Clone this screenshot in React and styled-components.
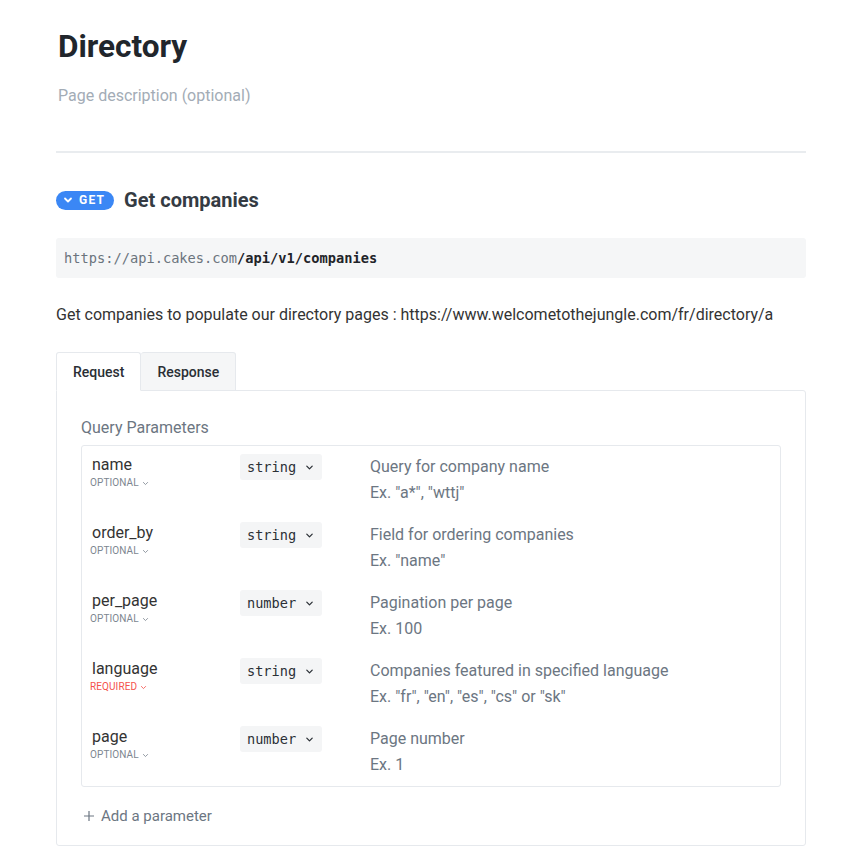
import React from 'react'
import styled, { createGlobalStyle } from 'styled-components'

const Global = createGlobalStyle`
  body {
    margin: 0;
    background: #fff;
    font-family: Roboto, 'Liberation Sans', sans-serif;
    color: #333;
  }
`

const Page = styled.div`
  padding: 29px 56px 0;
  width: 750px;
`
const Title = styled.h1`
  margin: 0 0 0 2px;
  font-size: 31.5px;
  line-height: 36px;
  font-weight: 700;
  color: #21262c;
`
const PageDesc = styled.p`
  margin: 19px 0 0 2px;
  font-size: 16px;
  line-height: 24px;
  color: #a3acb6;
`
const Divider = styled.hr`
  margin: 43px 0 0;
  border: 0;
  height: 2px;
  background: #e9ecef;
`
const EndpointHeader = styled.div`
  margin-top: 33px;
  display: flex;
  align-items: center;
  gap: 10px;
`
const Method = styled.span`
  display: inline-flex;
  align-items: center;
  gap: 6px;
  height: 19px;
  padding: 0 9px 0 7px;
  border-radius: 10px;
  background: #3b87f5;
  color: #fff;
  font-family: Roboto, sans-serif;
  font-size: 12px;
  font-weight: 700;
  letter-spacing: 1.2px;
`
const EndpointTitle = styled.h2`
  margin: 0;
  font-size: 20px;
  line-height: 28px;
  font-weight: 700;
  color: #343b43;
`
const UrlBox = styled.div`
  margin-top: 24px;
  height: 40px;
  display: flex;
  align-items: center;
  padding: 0 8px;
  background: #f5f6f7;
  border-radius: 3px;
  font-family: 'DejaVu Sans Mono', monospace;
  font-size: 13.7px;
  color: #6b747d;
  b {
    color: #1f2429;
    font-weight: 700;
  }
`
const Description = styled.p`
  margin: 25px 0 0;
  font-size: 16px;
  line-height: 24px;
  color: #333;
`
const Tabs = styled.div`
  margin-top: 25px;
  display: flex;
`
const Tab = styled.div`
  height: 39px;
  box-sizing: border-box;
  display: flex;
  align-items: center;
  padding: 0 16px;
  font-size: 14px;
  font-weight: 500;
  color: #2a2f35;
  border: 1px solid #e6e9ed;
  border-bottom: ${p => (p.$active ? '1px solid #fff' : '1px solid #e6e9ed')};
  border-left: ${p => (p.$active ? '1px solid #e6e9ed' : '0')};
  background: ${p => (p.$active ? '#fff' : '#f5f6f7')};
  border-radius: 3px 3px 0 0;
  margin-bottom: -1px;
  position: relative;
  z-index: 1;
`
const Panel = styled.div`
  border: 1px solid #e6e9ed;
  border-radius: 0 3px 3px 3px;
  padding: 25px 24px 17px;
`
const SectionLabel = styled.div`
  font-size: 16px;
  line-height: 24px;
  color: #6c7682;
`
const ParamTable = styled.div`
  margin-top: 5px;
  border: 1px solid #e6e9ed;
  border-radius: 3px;
`
const Row = styled.div`
  height: 68px;
  display: grid;
  grid-template-columns: 150px 130px 1fr;
  padding: 0 8px;
`
const NameCell = styled.div`
  padding-top: 9px;
`
const ParamName = styled.div`
  font-size: 16px;
  line-height: 20px;
  color: #333;
  margin-left: 2px;
`
const Flag = styled.div`
  margin-top: 1px;
  font-size: 10px;
  line-height: 14px;
  letter-spacing: 0.1px;
  color: ${p => (p.$required ? '#f4524d' : '#7d8690')};
  display: flex;
  align-items: center;
  gap: 3px;
`
const TypeCell = styled.div`
  padding-top: 8px;
`
const TypeChip = styled.span`
  display: inline-flex;
  align-items: center;
  gap: 9px;
  height: 26px;
  padding: 0 8px 0 7px;
  background: #f4f5f6;
  border-radius: 3px;
  font-family: 'DejaVu Sans Mono', monospace;
  font-size: 13.6px;
  color: #2b3036;
`
const DescCell = styled.div`
  padding-top: 8px;
  font-size: 16px;
  line-height: 26px;
  color: #6c7682;
`
const AddParam = styled.div`
  margin-top: 17px;
  margin-left: 2px;
  display: flex;
  align-items: center;
  gap: 6px;
  font-size: 15px;
  line-height: 24px;
  color: #6c7682;
`

const Chevron = ({ size = 8, width = 1.5 }) => (
  <svg width={size} height={size} viewBox="0 0 10 10" fill="none">
    <path
      d="M2 3.5 L5 6.5 L8 3.5"
      stroke="currentColor"
      strokeWidth={width}
      strokeLinecap="round"
      strokeLinejoin="round"
    />
  </svg>
)

const params = [
  { name: 'name', type: 'string', desc: 'Query for company name', ex: 'Ex. "a*", "wttj"' },
  { name: 'order_by', type: 'string', desc: 'Field for ordering companies', ex: 'Ex. "name"' },
  { name: 'per_page', type: 'number', desc: 'Pagination per page', ex: 'Ex. 100' },
  {
    name: 'language',
    type: 'string',
    desc: 'Companies featured in specified language',
    ex: 'Ex. "fr", "en", "es", "cs" or "sk"',
    required: true,
  },
  { name: 'page', type: 'number', desc: 'Page number', ex: 'Ex. 1' },
]

const App = () => (
  <>
    <Global />
    <Page>
      <Title>Directory</Title>
      <PageDesc>Page description (optional)</PageDesc>
      <Divider />
      <EndpointHeader>
        <Method>
          <Chevron size={10} width={1.8} />
          GET
        </Method>
        <EndpointTitle>Get companies</EndpointTitle>
      </EndpointHeader>
      <UrlBox>
        https://api.cakes.com<b>/api/v1/companies</b>
      </UrlBox>
      <Description>
        Get companies to populate our directory pages : https://www.welcometothejungle.com/fr/directory/a
      </Description>
      <Tabs>
        <Tab $active>Request</Tab>
        <Tab>Response</Tab>
      </Tabs>
      <Panel>
        <SectionLabel>Query Parameters</SectionLabel>
        <ParamTable>
          {params.map(p => (
            <Row key={p.name}>
              <NameCell>
                <ParamName>{p.name}</ParamName>
                <Flag $required={p.required}>
                  {p.required ? 'REQUIRED' : 'OPTIONAL'}
                  <Chevron size={7} width={1.2} />
                </Flag>
              </NameCell>
              <TypeCell>
                <TypeChip>
                  {p.type}
                  <Chevron size={9} width={1.4} />
                </TypeChip>
              </TypeCell>
              <DescCell>
                <div>{p.desc}</div>
                <div>{p.ex}</div>
              </DescCell>
            </Row>
          ))}
        </ParamTable>
        <AddParam>
          <svg width="12" height="12" viewBox="0 0 12 12">
            <path d="M6 1 V11 M1 6 H11" stroke="currentColor" strokeWidth="1.2" />
          </svg>
          Add a parameter
        </AddParam>
      </Panel>
    </Page>
  </>
)

export default App
